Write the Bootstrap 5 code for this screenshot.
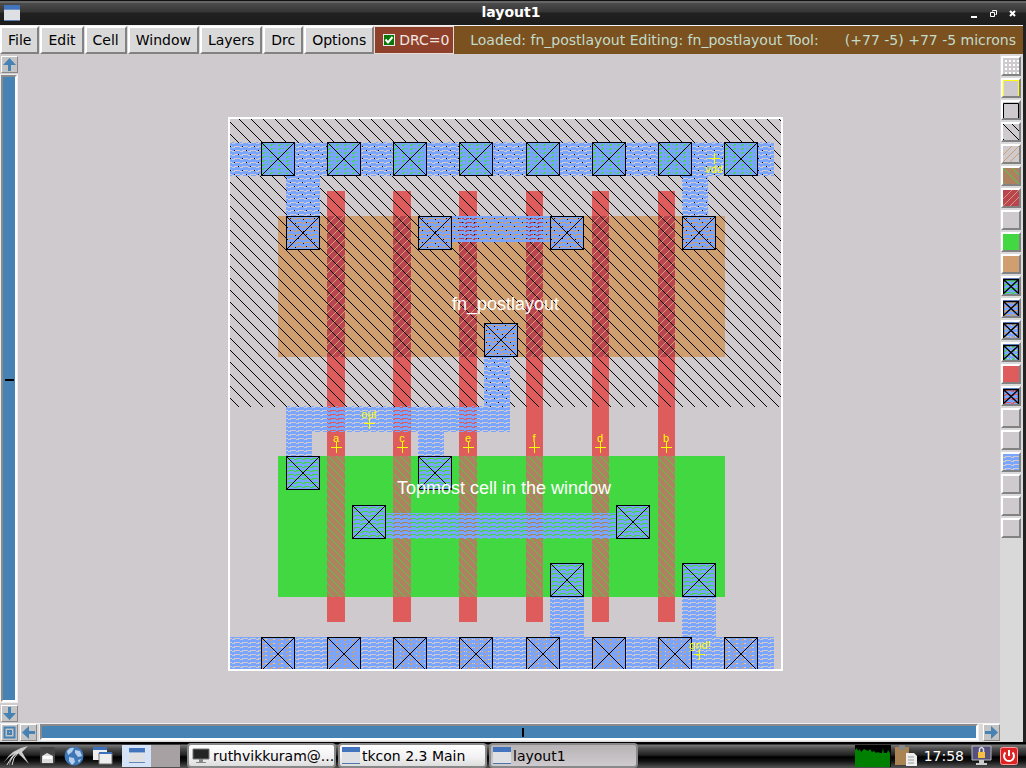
<!DOCTYPE html>
<html lang="en">
<head>
<meta charset="utf-8">
<meta name="viewport" content="width=device-width, initial-scale=1">
<title>layout1</title>
<link href="https://cdn.jsdelivr.net/npm/bootstrap@5.3.0/dist/css/bootstrap.min.css" rel="stylesheet">
<style>
  body { font: 14px/20px "DejaVu Sans", sans-serif; background: #222; color: #000; }
  svg { display: block; flex: none; }
  button { font: inherit; color: inherit; }
  .titlebar { height: 25px; background: linear-gradient(#111 0 1px, #666 1px 3px, #4c4c4c 3px, #363636 12px, #212121 13px, #1c1c1c); color: #fff; display: grid; grid-template-columns: 76px 1fr 80px; }
  .titlebar h1 { font-size: 14px; line-height: 24px; padding-bottom: 2px; font-weight: bold; }
  .plain { border: 0; padding: 0; background: none; }
  .client { background: #d9d9d9; margin-right: 3px; border-top: 1px solid #f2f2f2; }
  .menubar { height: 28px; }
  .menubar nav { gap: 1px; }
  .menu-btn { background: #d9d9d9; border: 2px solid; border-color: #fff #828282 #828282 #fff; padding: 0 6px; border-radius: 0; }
  .drc { background: #8f402b; color: #f3e6e0; border: 1px solid #e8dcd8; width: 80px; padding-left: 8px; gap: 4px; }
  .drc input { appearance: none; width: 12px; height: 12px; margin: 0; border: 1px solid #e8e8e8; background: #087808 url("data:image/svg+xml,%3Csvg xmlns='http://www.w3.org/2000/svg' viewBox='0 0 10 10'%3E%3Cpath d='M1.500 4.500L4 7.500 8.500 2' fill='none' stroke='white' stroke-width='2'/%3E%3C/svg%3E"); }
  .status { background: #7b5120; color: #c3dccb; padding: 0 7px 0 16px; }
  .canvas { background: #cfcacd; padding: 11px 8px 0 0; }
  .sq { width: 17px; height: 17px; background: #c4c4c4; border: 1px solid; border-color: #fff #888 #888 #fff; padding: 0; }
  .vbar { width: 19px; padding: 2px 0 1px 1px; background: #cfcacd; }
  .vtrough, .htrough { background: #4682b4; border: 2px solid; border-color: #8b8b8b #fff #fff #8b8b8b; outline: 1px solid #eee; display: flex; align-items: center; justify-content: center; }
  .vtrough { width: 16px; margin: 2px 0 3px; padding-bottom: 18px; }
  .htrough { height: 16px; margin: 0 3px 0 1px; padding-left: 28px; }
  .vtrough span { width: 9px; height: 2px; background: #000; }
  .htrough span { width: 2px; height: 9px; background: #000; }
  .hbar { height: 19px; padding: 0 0 1px 1px; border-top: 1px solid #f4f4f4; gap: 2px; }
  .palette { width: 23px; padding: 1px 1px 0; }
  .layer-btn { width: 20px; height: 20px; margin: 1px 0; padding: 0; border: 2px solid; border-color: #fff #828282 #828282 #fff; background: #cfcacd; }
  .taskbar { height: 26px; background: linear-gradient(#000 0 1px, #777 2px, #4a4a4a 6px, #222 12px, #000 14px, #111 18px, #555 25px); border-top: 1px solid #000; }
  .task { width: 149px; height: 25px; margin-right: 2px; padding: 0 2px; gap: 2px; border: 2px solid #888; border-radius: 4px; background: linear-gradient(#fff, #f2f0f2 60%, #ddd); text-align: left; white-space: nowrap; overflow: hidden; }
  .task.current { background: linear-gradient(#b8b4b6, #cfcacd); }
  .pager { width: 29px; height: 22px; }
  .pager-on { background: #d5e3f8; }
  .pager-off { background: #a8a1a3; margin-right: 7px; }
  .clock { margin: 0 7px; }
  .cell-name { font: 18px "Liberation Sans", sans-serif; fill: #fff; }
  .net { font: 11px "Liberation Sans", sans-serif; fill: #ff0; text-anchor: middle; }
</style>
</head>
<body class="d-flex flex-column min-vh-100">

<!-- Shared patterns and symbols -->
<svg width="0" height="0" class="position-absolute" aria-hidden="true">
  <defs>
    <pattern id="well" width="12" height="12" patternUnits="userSpaceOnUse"><path d="M-1-1L13 13" stroke="#000" stroke-width="1.200" shape-rendering="crispEdges"/></pattern>
    <pattern id="metal" width="8" height="4" patternUnits="userSpaceOnUse" shape-rendering="crispEdges"><path d="M0 0h8v2h-8zM0 2h2v1H0zM3 3h5v1H3z" fill="#7aa5ff"/></pattern>
    <pattern id="pgate" width="8" height="8" patternUnits="userSpaceOnUse"><rect width="8" height="8" fill="#ba4450"/><path d="M-1 9L9-1" stroke="#d0a070" shape-rendering="crispEdges"/></pattern>
    <pattern id="ngate" width="8" height="8" patternUnits="userSpaceOnUse"><rect width="8" height="8" fill="#ae8261"/><path d="M-1-1L9 9" stroke="#55c844" shape-rendering="crispEdges"/></pattern>
    <pattern id="gdots" width="8" height="8" patternUnits="userSpaceOnUse"><path d="M1 0h3v8H1zM6 0h1v8H6z" fill="#42d842" shape-rendering="crispEdges"/></pattern>
    <pattern id="tdots" width="8" height="8" patternUnits="userSpaceOnUse"><path d="M1 0h3v8H1zM6 0h1v8H6z" fill="#cf9f70" shape-rendering="crispEdges"/></pattern>
    <g id="cut"><rect width="34" height="34" fill="url(#metal)"/><path d="M.5.5h33v33H.5zL33.500 33.500M33.500.5L.5 33.500" fill="none" stroke="#000" shape-rendering="crispEdges"/></g>
    <g id="cutg"><rect width="34" height="34" fill="url(#gdots)"/><use href="#cut"/></g>
    <g id="cutt"><rect width="34" height="34" fill="url(#tdots)"/><use href="#cut"/></g>
    <path id="plus" d="M-5 0.500H6M.5-5V6" stroke="#ff0" fill="none"/>
    <g id="mini"><rect width="16" height="16" fill="url(#metal)"/><path d="M.5 16V1.500H15.500V16M1 2L15 15M15 2L1 15" fill="none" stroke="#000" stroke-width="1.300"/></g>
    <g id="win"><rect width="18" height="17" fill="#dfe0e4"/><rect width="18" height="5" fill="#4275bd"/><path d="M0 16.500h18" stroke="#4f74a8"/></g>
  </defs>
</svg>

<header class="titlebar align-items-center">
  <svg class="ms-1" width="16" height="16" viewBox="0 0 18 17" preserveAspectRatio="none"><use href="#win"/></svg>
  <h1 class="m-0 text-center">layout1</h1>
  <div class="d-flex justify-content-end gap-2 pe-2">
    <button class="plain" aria-label="Minimize"><svg width="11" height="11"><path d="M2 9h6" stroke="#fff" stroke-width="2"/></svg></button>
    <button class="plain" aria-label="Restore"><svg width="11" height="11"><path d="M4.500 3.500V2.500h4v4h-1M2.500 4.500h4v4h-4z" fill="none" stroke="#fff"/></svg></button>
    <button class="plain" aria-label="Close"><svg width="11" height="11"><path d="M3 3L8 8M8 3L3 8" stroke="#fff" stroke-width="2"/></svg></button>
  </div>
</header>

<main class="client flex-grow-1 d-flex flex-column">
  <div class="menubar d-flex">
    <nav class="d-flex">
      <button class="menu-btn">File</button><button class="menu-btn">Edit</button><button class="menu-btn">Cell</button><button class="menu-btn">Window</button><button class="menu-btn">Layers</button><button class="menu-btn">Drc</button><button class="menu-btn">Options</button>
    </nav>
    <label class="drc d-flex align-items-center"><input type="checkbox" checked>DRC=0</label>
    <div class="status flex-grow-1 d-flex align-items-center justify-content-between text-nowrap"><span>Loaded: fn_postlayout Editing: fn_postlayout Tool:</span><span>(+77 -5) +77 -5 microns</span></div>
  </div>

  <div class="flex-grow-1 d-flex">
    <div class="flex-grow-1 d-flex flex-column">
      <div class="flex-grow-1 d-flex">
        <div class="vbar d-flex flex-column">
          <button class="sq" aria-label="Scroll up"><svg width="15" height="15"><path d="M7.500 1L14 8H9v6H6V8H1z" fill="#4682b4"/></svg></button>
          <div class="vtrough flex-grow-1" role="scrollbar" aria-label="Vertical" aria-controls="view" aria-valuenow="50"><span></span></div>
          <button class="sq" aria-label="Scroll down"><svg width="15" height="15"><path d="M7.500 14L14 7H9V1H6v6H1z" fill="#4682b4"/></svg></button>
        </div>
        <div id="view" class="canvas flex-grow-1 d-flex align-items-center justify-content-center">
          <svg width="555" height="554" viewBox="228 117 555 554" role="img" aria-label="fn_postlayout">
            <g shape-rendering="crispEdges">
              <path d="M278 216h447v141H278z" fill="#cf9f70"/>
              <path d="M278 456h447v141H278z" fill="#42d842"/>
              <path d="M327 191h18v431h-18zM393 191h18v431h-18zM459 191h18v431h-18zM526 191h17v431h-17zM592 191h17v431h-17zM658 191h17v431h-17z" fill="#df5c5c"/>
              <path d="M327 216h18v141h-18zM393 216h18v141h-18zM459 216h18v141h-18zM526 216h17v141h-17zM592 216h17v141h-17zM658 216h17v141h-17z" fill="url(#pgate)"/>
              <path d="M327 456h18v141h-18zM393 456h18v141h-18zM459 456h18v141h-18zM526 456h17v141h-17zM592 456h17v141h-17zM658 456h17v141h-17z" fill="url(#ngate)"/>
              <path d="M230 119h551v288H230z" fill="url(#well)"/>
              <path d="M230 142h544v34H230zM286 176h34v40h-34zM682 176h26v40h-26zM452 216h98v26h-98zM484 357h26v75H286v-26h198zM286 432h26v24h-26zM418 432h26v24h-26zM386 513h230v26H386zM550 597h34v40h-34zM682 597h34v40h-34zM230 637h544v32H230z" fill="url(#metal)"/>
            </g>
            <use href="#cutg" x="261" y="142"/><use href="#cutg" x="327" y="142"/><use href="#cutg" x="393" y="142"/><use href="#cutg" x="459" y="142"/><use href="#cutg" x="526" y="142"/><use href="#cutg" x="592" y="142"/><use href="#cutg" x="658" y="142"/><use href="#cutg" x="724" y="142"/>
            <use href="#cut" x="286" y="216"/><use href="#cut" x="418" y="216"/><use href="#cut" x="550" y="216"/><use href="#cut" x="682" y="216"/><use href="#cut" x="484" y="323"/>
            <use href="#cut" x="286" y="456"/><use href="#cut" x="418" y="456"/><use href="#cut" x="352" y="505"/><use href="#cut" x="616" y="505"/><use href="#cut" x="550" y="563"/><use href="#cut" x="682" y="563"/>
            <use href="#cutt" x="261" y="637"/><use href="#cutt" x="327" y="637"/><use href="#cutt" x="393" y="637"/><use href="#cutt" x="459" y="637"/><use href="#cutt" x="526" y="637"/><use href="#cutt" x="592" y="637"/><use href="#cutt" x="658" y="637"/><use href="#cutt" x="724" y="637"/>
            <rect x="229" y="118" width="553" height="552" fill="none" stroke="#fff" stroke-width="2"/>
            <use href="#plus" x="336" y="447"/><use href="#plus" x="402" y="447"/><use href="#plus" x="468" y="447"/><use href="#plus" x="534" y="447"/><use href="#plus" x="600" y="447"/><use href="#plus" x="666" y="447"/><use href="#plus" x="369" y="423"/><use href="#plus" x="714" y="158"/><use href="#plus" x="699" y="654"/>
            <g class="net"><text x="336" y="442">a</text><text x="402" y="442">c</text><text x="468" y="442">e</text><text x="534" y="442">f</text><text x="600" y="442">d</text><text x="666" y="442">b</text><text x="369" y="418">out</text><text x="714" y="173">vdd</text><text x="700" y="649">gnd!</text></g>
            <g class="cell-name"><text x="452" y="310">fn_postlayout</text><text x="397" y="494">Topmost cell in the window</text></g>
          </svg>
        </div>
      </div>
      <div class="hbar d-flex">
        <button class="sq" aria-label="Zoom"><svg width="15" height="15"><path d="M2.500 2.500h10v10h-10zM6 6h3v3H6z" fill="none" stroke="#4682b4" stroke-width="2"/></svg></button>
        <button class="sq" aria-label="Scroll left"><svg width="15" height="15"><path d="M1 7.500L8 1v5h6v3H8v5z" fill="#4682b4"/></svg></button>
        <div class="htrough flex-grow-1" role="scrollbar" aria-label="Horizontal" aria-controls="view" aria-valuenow="50"><span></span></div>
        <button class="sq" aria-label="Scroll right"><svg width="15" height="15"><path d="M14 7.500L7 1v5H1v3h6v5z" fill="#4682b4"/></svg></button>
      </div>
    </div>
    <div class="palette d-flex flex-column" id="palette"></div>
  </div>
</main>

<footer class="taskbar d-flex align-items-center">
  <button class="plain ms-1" aria-label="Menu"><svg width="28" height="24"><path d="M0 18Q8 5 24 2L18 8 25 20 14 9Q8 12 5 22 6 13 11 9 4 13 0 18z" fill="#ccc"/><path d="M3 21Q8 11 14 8M8 21Q9 13 14 9" stroke="#ddd" fill="none"/></svg></button>
  <button class="plain ms-2" aria-label="Files"><svg width="16" height="20"><rect y="1" width="15" height="17" rx="2" fill="#444"/><path d="M2 10l5-3 6 3v7H2z" fill="#ddd"/><path d="M3 10h9v3H3z" fill="#fff"/></svg></button>
  <button class="plain ms-2" aria-label="Browser"><svg width="20" height="20"><circle cx="10" cy="10" r="9.500" fill="#3f76b6"/><path d="M3 5Q6 1 10 2L8 6 4 9zM11 4l5 1 2 5-4 1-3-4zM5 11l5 1 1 4-3 3-3-4zM14 14l3-1-2 4z" fill="#b5d0ec"/></svg></button>
  <button class="plain ms-2" aria-label="Show desktop"><svg width="22" height="20"><path d="M1 2h14v12H1z" fill="#eee"/><path d="M1 1h14v3H1z" fill="#3d6fba"/><path d="M7 7h13v11H7z" fill="#eee" stroke="#777"/><path d="M7 6h13v2H7z" fill="#3d6fba"/></svg></button>
  <button class="plain pager pager-on ms-2 d-flex align-items-center justify-content-center" aria-label="Desktop 1"><svg width="16" height="15" viewBox="0 0 18 17"><use href="#win"/></svg></button>
  <button class="plain pager pager-off" aria-label="Desktop 2"></button>
  <button class="task d-flex align-items-center"><svg width="20" height="18"><path d="M2 2h16v10H2z" fill="#252525" stroke="#777"/><path d="M8 12h4v3h3v1H5v-1h3z" fill="#888"/></svg>ruthvikkuram@...</button>
  <button class="task d-flex align-items-center"><svg width="18" height="17"><use href="#win"/></svg>tkcon 2.3 Main</button>
  <button class="task current d-flex align-items-center"><svg width="18" height="17"><use href="#win"/></svg>layout1</button>
  <div class="ms-auto d-flex align-items-center text-white pe-2">
    <svg width="36" height="22"><path d="M0 0h36v22H0z" fill="#000"/><path d="M0 22V5l2-2 1 3 2-2 1 3 3-3 2 1 2 1 2-2 2 3 2-1 2 2 2-1 2 1 2 0 1-5 1 5 3 0 1-3 2 3v14z" fill="#008000"/></svg>
    <svg class="ms-1" width="22" height="22"><path d="M0 2h14v18H0z" fill="#a98452"/><path d="M4 0h6v5H4z" fill="#888"/><path d="M11 8h8l3 3v10H11z" fill="#eee"/><path d="M13 12h6M13 15h6M13 18h6" stroke="#999"/></svg>
    <time class="clock">17:58</time>
    <svg width="21" height="21"><path d="M1 1h19v14H1z" fill="#56507c" stroke="#bbb"/><path d="M8 15h5v3h3v2H5v-2h3z" fill="#ccc"/><path d="M7 7h7v6H7z" fill="#f3c13f"/><path d="M8.500 7V4q2-3 4 0v3" fill="none" stroke="#ddd" stroke-width="1.500"/></svg>
    <button class="plain ms-2" aria-label="Power"><svg width="18" height="18"><rect width="17" height="17" x=".5" y=".5" rx="2" fill="#dd2424" stroke="#f99"/><path d="M5.500 5.500a5 5 0 1 0 7 0M9 3v6" fill="none" stroke="#fff" stroke-width="2"/></svg></button>
  </div>
</footer>

<script>
  const fill = c => `<rect width="16" height="16" fill="${c}"/>`;
  const hatch = (d, c) => `<path d="${d}" stroke="${c}" shape-rendering="crispEdges"/>`;
  const down = "M0 0L16 16M9 0L16 7M0 15L1 16", up = "M0 9L9 0M0 16L16 0M7 16L16 7";
  let dots = "";
  for (let y = 2; y < 16; y += 4) for (let x = 2; x < 16; x += 4) dots += `M${x} ${y}h2v2h-2z`;
  const layers = [
    ["grid", `<path d="${dots}" fill="#fff"/>`],
    ["yellow box", `<path d="M.5 16V.5H15.500V16" fill="none" stroke="#ff0"/>`],
    ["black box", `<path d="M.5 16V1.500H15.500V16" fill="none" stroke="#000"/>`],
    ["nwell", hatch(down, "#000")],
    ["pwell", hatch(up, "#cf9f70")],
    ["nfet", fill("#ae8261") + hatch(down, "#42d842")],
    ["pfet", fill("#ba4450") + hatch(up, "#cf9f70")],
    ["space", ""],
    ["ndiff", fill("#42d842")],
    ["pdiff", fill("#cf9f70")],
    ["ndc", fill("#42d842") + '<use href="#mini"/>'],
    ["pdc", fill("#cf9f70") + '<use href="#mini"/>'],
    ["psc", '<rect width="16" height="16" fill="url(#tdots)"/><use href="#mini"/>'],
    ["nsc", '<rect width="16" height="16" fill="url(#gdots)"/><use href="#mini"/>'],
    ["poly", fill("#df5c5c")],
    ["pc", fill("#df5c5c") + '<use href="#mini"/>'],
    ["m5", ""], ["m4", ""],
    ["metal1", fill("url(#metal)")],
    ["m2", ""], ["m3", ""], ["pad", ""]
  ];
  document.getElementById("palette").innerHTML = layers.map(([n, s]) =>
    `<button class="layer-btn" aria-label="${n}"><svg width="16" height="16">${s}</svg></button>`).join("");
</script>
<script src="https://cdn.jsdelivr.net/npm/bootstrap@5.3.0/dist/js/bootstrap.bundle.min.js"></script>
</body>
</html>
